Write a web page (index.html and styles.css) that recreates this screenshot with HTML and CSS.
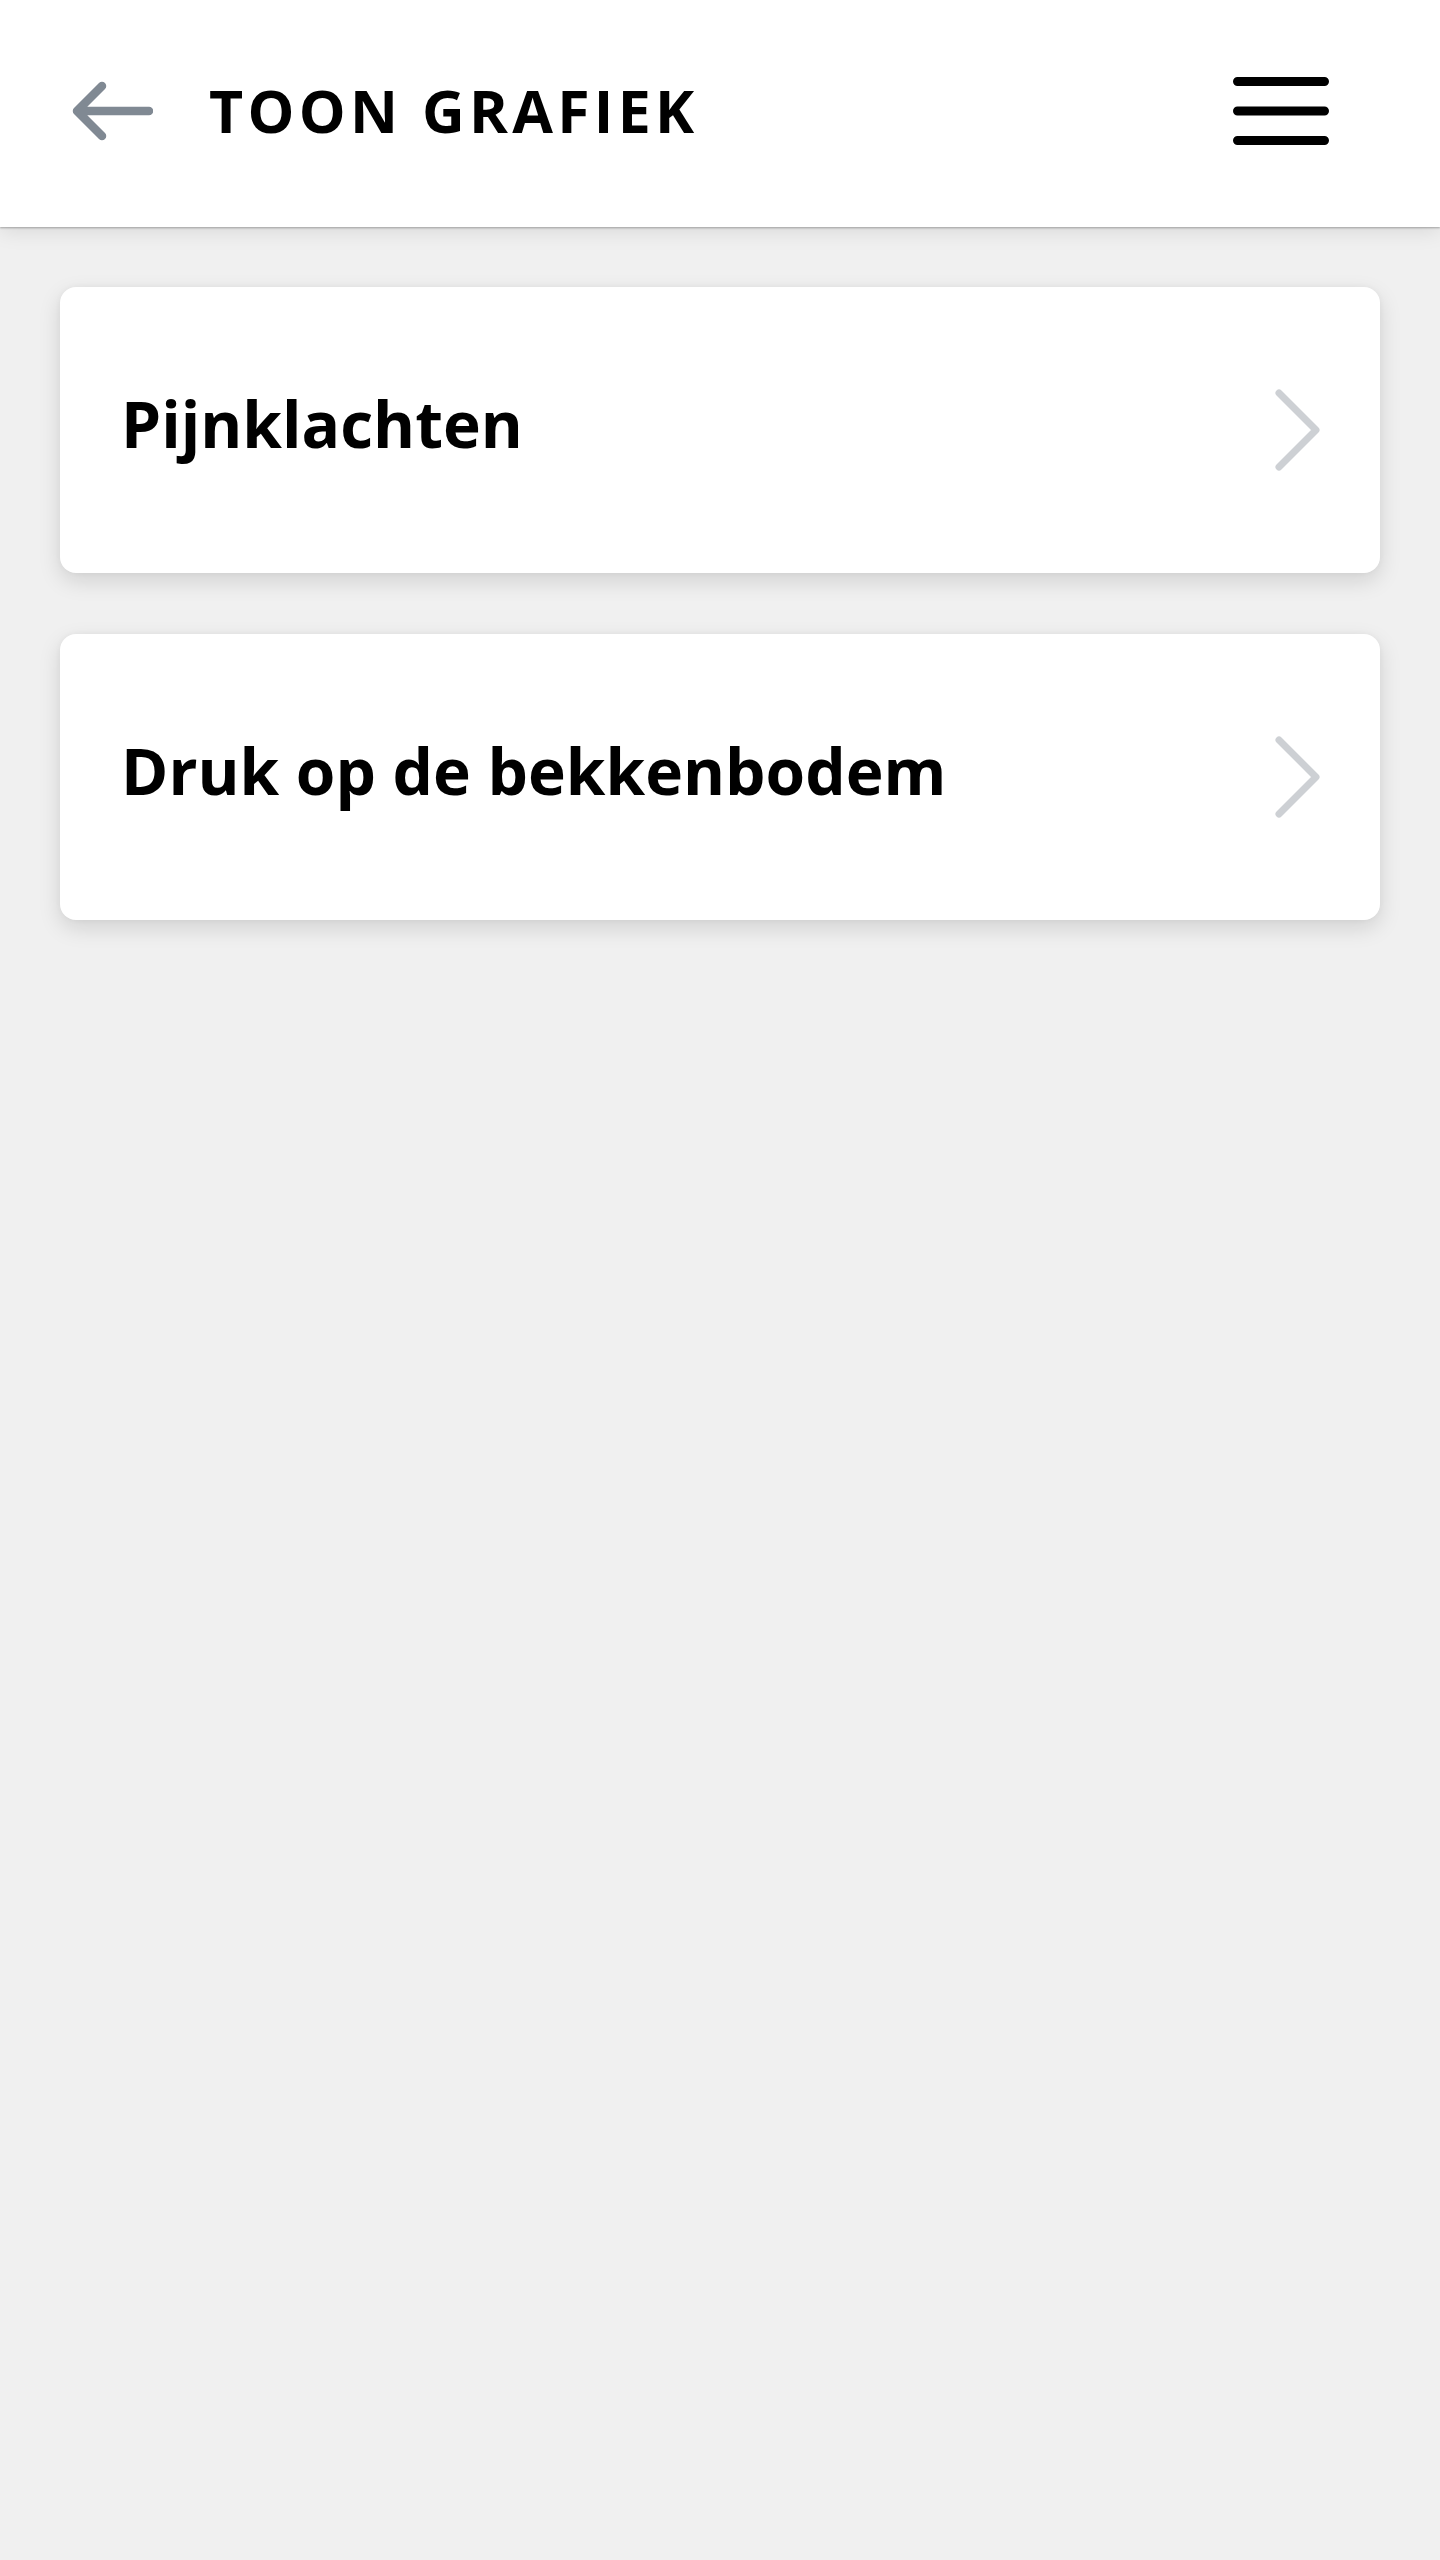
FILE: index.html
```html
<!DOCTYPE html>
<html lang="nl">
<head>
<meta charset="utf-8">
<title>Toon grafiek</title>
<link rel="stylesheet" href="styles.css">
</head>
<body>
<header class="topbar">
  <button class="icon-btn back" aria-label="Terug">
    <svg width="82" height="62" viewBox="0 0 82 62" fill="none" stroke="#808993" stroke-width="8.5" stroke-linecap="round" stroke-linejoin="round">
      <path d="M78 31H6M31 6L6 31l25 25"/>
    </svg>
  </button>
  <h1 class="title">TOON GRAFIEK</h1>
  <button class="icon-btn menu" aria-label="Menu">
    <svg width="96" height="68" viewBox="0 0 96 68" fill="none" stroke="#000" stroke-width="9" stroke-linecap="round">
      <path d="M4.5 4.5h87M4.5 34h87M4.5 63.5h87"/>
    </svg>
  </button>
</header>
<main class="list">
  <a class="card" href="#">
    <span class="card-label">Pijnklachten</span>
    <svg class="chev" width="48" height="84" viewBox="0 0 48 84" fill="none" stroke="#cdd0d4" stroke-width="7" stroke-linecap="round" stroke-linejoin="round">
      <path d="M5 5l37 37L5 79"/>
    </svg>
  </a>
  <a class="card" href="#">
    <span class="card-label">Druk op de bekkenbodem</span>
    <svg class="chev" width="48" height="84" viewBox="0 0 48 84" fill="none" stroke="#cdd0d4" stroke-width="7" stroke-linecap="round" stroke-linejoin="round">
      <path d="M5 5l37 37L5 79"/>
    </svg>
  </a>
</main>
</body>
</html>
```
FILE: styles.css
```css
* { box-sizing: border-box; }
html, body {
  margin: 0;
  padding: 0;
  background: #f0f0f0;
  font-family: "Open Sans", "Noto Sans", sans-serif;
  min-height: 2560px;
}
.topbar {
  position: relative;
  z-index: 2;
  height: 227px;
  background: #fff;
  display: flex;
  align-items: center;
  padding: 0 0 6px 71px;
  box-shadow: 0 1px 2px rgba(0,0,0,0.3), 0 4px 20px rgba(0,0,0,0.1);
}
.icon-btn {
  border: 0;
  background: none;
  padding: 0;
  display: flex;
  align-items: center;
  cursor: pointer;
}
.title {
  margin: 0 0 0 56px;
  font-size: 59px;
  font-weight: 700;
  letter-spacing: 4.3px;
  color: #000;
  flex: 1;
  line-height: 1;
}
.menu { margin-right: 111px; }
.list {
  padding: 60px 60px;
  display: flex;
  flex-direction: column;
  gap: 61px;
}
.card {
  height: 286px;
  background: #fff;
  border-radius: 16px;
  display: flex;
  align-items: center;
  justify-content: space-between;
  padding: 0 58px 0 61px;
  text-decoration: none;
  color: #000;
  box-shadow: 0 8px 22px rgba(0,0,0,0.13), 0 0 6px rgba(0,0,0,0.04);
}
.card-label {
  font-size: 64px;
  font-weight: 700;
  line-height: 1;
  margin-bottom: 13px;
}
.chev { display: block; }
```
